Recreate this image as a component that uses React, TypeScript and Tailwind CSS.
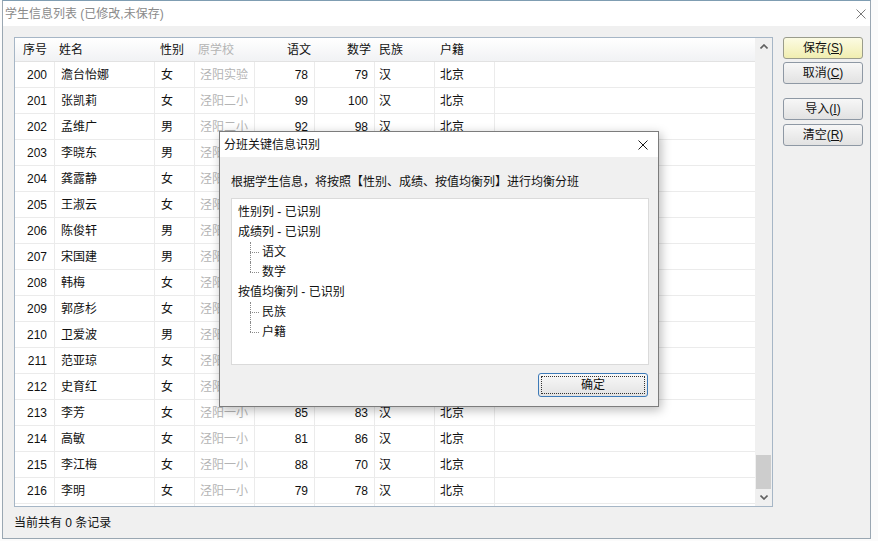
import React from 'react';

type Student = {
    no: number;
    name: string;
    gender: string;
    school: string;
    chinese: number;
    math: number;
    nation: string;
    hukou: string;
};

const students: Student[] = [
    { no: 200, name: '澹台怡娜', gender: '女', school: '泾阳实验', chinese: 78, math: 79, nation: '汉', hukou: '北京' },
    { no: 201, name: '张凯莉', gender: '女', school: '泾阳二小', chinese: 99, math: 100, nation: '汉', hukou: '北京' },
    { no: 202, name: '孟维广', gender: '男', school: '泾阳二小', chinese: 92, math: 98, nation: '汉', hukou: '北京' },
    { no: 203, name: '李晓东', gender: '男', school: '泾阳二小', chinese: 87, math: 91, nation: '汉', hukou: '北京' },
    { no: 204, name: '龚露静', gender: '女', school: '泾阳二小', chinese: 90, math: 88, nation: '汉', hukou: '北京' },
    { no: 205, name: '王淑云', gender: '女', school: '泾阳二小', chinese: 84, math: 80, nation: '汉', hukou: '北京' },
    { no: 206, name: '陈俊轩', gender: '男', school: '泾阳二小', chinese: 76, math: 95, nation: '汉', hukou: '北京' },
    { no: 207, name: '宋国建', gender: '男', school: '泾阳二小', chinese: 82, math: 89, nation: '汉', hukou: '北京' },
    { no: 208, name: '韩梅', gender: '女', school: '泾阳二小', chinese: 93, math: 85, nation: '汉', hukou: '北京' },
    { no: 209, name: '郭彦杉', gender: '女', school: '泾阳二小', chinese: 88, math: 77, nation: '汉', hukou: '北京' },
    { no: 210, name: '卫爱波', gender: '男', school: '泾阳二小', chinese: 79, math: 92, nation: '汉', hukou: '北京' },
    { no: 211, name: '范亚琼', gender: '女', school: '泾阳二小', chinese: 91, math: 84, nation: '汉', hukou: '北京' },
    { no: 212, name: '史育红', gender: '女', school: '泾阳二小', chinese: 86, math: 81, nation: '汉', hukou: '北京' },
    { no: 213, name: '李芳', gender: '女', school: '泾阳一小', chinese: 85, math: 83, nation: '汉', hukou: '北京' },
    { no: 214, name: '高敏', gender: '女', school: '泾阳一小', chinese: 81, math: 86, nation: '汉', hukou: '北京' },
    { no: 215, name: '李江梅', gender: '女', school: '泾阳一小', chinese: 88, math: 70, nation: '汉', hukou: '北京' },
    { no: 216, name: '李明', gender: '女', school: '泾阳一小', chinese: 79, math: 78, nation: '汉', hukou: '北京' },
];

const CloseIcon = ({ size, color }: { size: number; color: string }) => (
    <svg width={size} height={size} viewBox={`0 0 ${size} ${size}`}>
        <path d={`M0.5 0.5 L${size - 0.5} ${size - 0.5} M${size - 0.5} 0.5 L0.5 ${size - 0.5}`} stroke={color} strokeWidth="1" fill="none" />
    </svg>
);

const Chevron = ({ up }: { up?: boolean }) => (
    <svg width="8" height="5" viewBox="0 0 8 5">
        <polyline points={up ? '0.5,4.5 4,1 7.5,4.5' : '0.5,0.5 4,4 7.5,0.5'} stroke="#606060" strokeWidth="1.6" fill="none" />
    </svg>
);

// side button with an underlined access key
function SideButton({ label, hotkey, highlight, className = '' }: { label: string; hotkey: string; highlight?: boolean; className?: string }) {
    return (
        <div
            className={`h-[22px] w-[80px] flex items-center justify-center rounded-[3px] border text-[12px] leading-none ${
                highlight
                    ? 'border-[#9a9c8c] bg-gradient-to-b from-[#fcfbe3] to-[#f1eeb0]'
                    : 'border-[#8e98a4] bg-gradient-to-b from-[#f7f7f7] to-[#e2e2e2]'
            } ${className}`}
        >
            {label}(<span className="underline">{hotkey}</span>)
        </div>
    );
}

function StudentRow({ s }: { s: Student }) {
    return (
        <div className="flex h-[26px] shrink-0 border-b border-[#ebebeb] text-[12px] leading-none">
            <div className="w-[40px] flex items-center justify-end pr-[7px] border-r border-[#ebebeb]">{s.no}</div>
            <div className="w-[100px] flex items-center pl-[6px] border-r border-[#ebebeb]">{s.name}</div>
            <div className="w-[40px] flex items-center pl-[6px] border-r border-[#ebebeb]">{s.gender}</div>
            <div className="w-[60px] flex items-center pl-[5px] border-r border-[#ebebeb] text-[#b4b4b4]">{s.school}</div>
            <div className="w-[60px] flex items-center justify-end pr-[6px] border-r border-[#ebebeb]">{s.chinese}</div>
            <div className="w-[60px] flex items-center justify-end pr-[6px] border-r border-[#ebebeb]">{s.math}</div>
            <div className="w-[60px] flex items-center pl-[4px] border-r border-[#ebebeb]">{s.nation}</div>
            <div className="w-[60px] flex items-center pl-[5px] border-r border-[#ebebeb]">{s.hukou}</div>
            <div className="flex-1" />
        </div>
    );
}

// tree child with dotted connector
function TreeChild({ text, last }: { text: string; last?: boolean }) {
    return (
        <div className="flex h-[20px] items-stretch">
            <div className="w-[12px]" />
            <div className="relative w-[12px]">
                <div className={`absolute left-0 top-0 border-l border-dotted border-[#8a8a8a] ${last ? 'h-[10px]' : 'h-[20px]'}`} />
                <div className="absolute left-0 top-[10px] w-[9px] border-t border-dotted border-[#8a8a8a]" />
            </div>
            <div className="flex items-center">{text}</div>
        </div>
    );
}

function ClassDialog() {
    return (
        <div className="absolute left-[219px] top-[131px] w-[440px] h-[276px] border border-[#7c7c7c] bg-[#f0f0f0] flex flex-col shadow-[2px_3px_10px_rgba(0,0,0,0.28)]">
            <div className="h-[25px] bg-white flex items-center justify-between pl-[4px] pr-[10px] text-[12px]">
                <span>分班关键信息识别</span>
                <CloseIcon size={10} color="#1a1a1a" />
            </div>
            <div className="flex flex-col pl-[11px] pr-[9px] pt-[17px] text-[12px]">
                <div className="leading-[16px]">根据学生信息，将按照【性别、成绩、按值均衡列】进行均衡分班</div>
                <div className="mt-[8px] h-[167px] border border-[#dadada] bg-white pl-[6px] pt-[3px] leading-none">
                    <div className="h-[20px] flex items-center">性别列 - 已识别</div>
                    <div className="h-[20px] flex items-center">成绩列 - 已识别</div>
                    <TreeChild text="语文" />
                    <TreeChild text="数学" last />
                    <div className="h-[20px] flex items-center">按值均衡列 - 已识别</div>
                    <TreeChild text="民族" />
                    <TreeChild text="户籍" last />
                </div>
                <div className="flex justify-end mt-[8px] pr-[1px]">
                    <div className="w-[110px] h-[24px] rounded-[3px] border border-[#3d7ab8] bg-gradient-to-b from-[#f8f8f8] to-[#e3e3e3] p-[2px]">
                        <div className="h-full w-full border border-dotted border-[#333] flex items-center justify-center leading-none">确定</div>
                    </div>
                </div>
            </div>
        </div>
    );
}

export default function App() {
    return (
        <div
            className="relative w-[878px] h-[541px] bg-[#fbfbfb] overflow-hidden text-[#111]"
            style={{ fontFamily: '"Liberation Sans", "Noto Sans CJK SC", sans-serif' }}
        >
            <div className="ml-[2px] w-[869px] h-[539px] border border-[#9aa7b2] border-t-[#7f9db2] bg-[#f0f0f0] flex flex-col">
                <div className="h-[25px] bg-white flex items-center justify-between pl-[2px] pr-[4px] shrink-0">
                    <span className="text-[12px] text-[#8a8a8a]">学生信息列表 (已修改,未保存)</span>
                    <CloseIcon size={10} color="#7a7a7a" />
                </div>

                <div className="flex pl-[11px] pt-[11px]">
                    {/* student grid */}
                    <div className="w-[759px] h-[470px] border border-[#a6b6c6] bg-white flex">
                        <div className="w-[740px] flex flex-col overflow-hidden">
                            <div className="flex h-[24px] shrink-0 border-b border-[#e2e2e2] bg-gradient-to-b from-[#ffffff] to-[#f1f2f4] text-[12px] leading-none">
                                <div className="w-[40px] flex items-center justify-center">序号</div>
                                <div className="w-[100px] flex items-center pl-[4px]">姓名</div>
                                <div className="w-[40px] flex items-center pl-[5px]">性别</div>
                                <div className="w-[60px] flex items-center pl-[3px] text-[#b4b4b4]">原学校</div>
                                <div className="w-[60px] flex items-center justify-end pr-[4px]">语文</div>
                                <div className="w-[60px] flex items-center justify-end pr-[4px]">数学</div>
                                <div className="w-[60px] flex items-center pl-[4px]">民族</div>
                                <div className="w-[60px] flex items-center pl-[5px]">户籍</div>
                                <div className="flex-1" />
                            </div>
                            {students.map(s => (
                                <StudentRow key={s.no} s={s} />
                            ))}
                            <div className="flex h-[26px] shrink-0">
                                <div className="w-[40px] border-r border-[#ebebeb]" />
                                <div className="w-[100px] border-r border-[#ebebeb]" />
                                <div className="w-[40px] border-r border-[#ebebeb]" />
                                <div className="w-[60px] border-r border-[#ebebeb]" />
                                <div className="w-[60px] border-r border-[#ebebeb]" />
                                <div className="w-[60px] border-r border-[#ebebeb]" />
                                <div className="w-[60px] border-r border-[#ebebeb]" />
                                <div className="w-[60px] border-r border-[#ebebeb]" />
                            </div>
                        </div>
                        {/* vertical scrollbar */}
                        <div className="w-[17px] bg-[#f0f0f0] flex flex-col">
                            <div className="h-[17px] flex items-center justify-center">
                                <Chevron up />
                            </div>
                            <div className="flex-1" />
                            <div className="h-[34px] mx-[1px] bg-[#cdcdcd]" />
                            <div className="h-[17px] flex items-center justify-center">
                                <Chevron />
                            </div>
                        </div>
                    </div>

                    <div className="ml-[10px] flex flex-col">
                        <SideButton label="保存" hotkey="S" highlight />
                        <SideButton label="取消" hotkey="C" className="mt-[3px]" />
                        <SideButton label="导入" hotkey="I" className="mt-[14px]" />
                        <SideButton label="清空" hotkey="R" className="mt-[4px]" />
                    </div>
                </div>

                <div className="pl-[11px] mt-[8px] text-[12px] leading-[16px]">当前共有 0 条记录</div>
            </div>

            <ClassDialog />
        </div>
    );
}
